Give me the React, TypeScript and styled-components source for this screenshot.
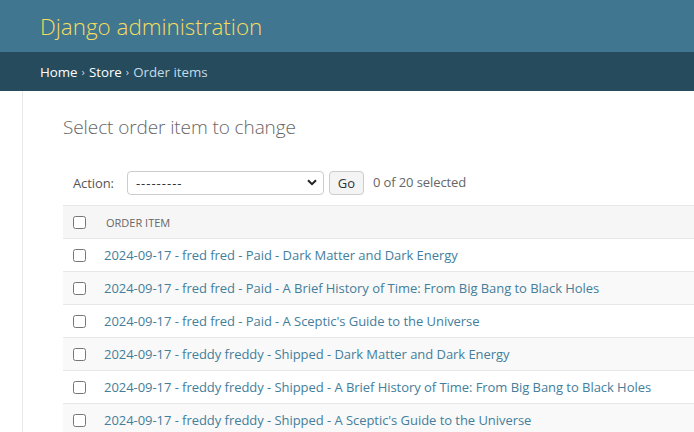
import React from "react";
import styled, { createGlobalStyle } from "styled-components";

const Global = createGlobalStyle`
  html, body { margin: 0; padding: 0; background: #fff; }
  body { font-family: "Open Sans", "Noto Sans", sans-serif; color: #333; font-size: 14px; overflow: hidden; }
  * { box-sizing: border-box; }
`;

const Header = styled.header`
  height: 52px;
  background: #417690;
  padding: 0 40px;
  display: flex;
  align-items: center;
`;

const Brand = styled.h1`
  margin: 0;
  font-size: 22.4px;
  font-weight: 300;
  color: #f5dd5d;
`;

const Breadcrumbs = styled.nav`
  height: 39px;
  background: #264b5d;
  padding: 0 40px;
  display: flex;
  align-items: center;
  font-size: 13.3px;
  color: #c4dce8;
`;

const Crumb = styled.a`
  color: #fff;
  text-decoration: none;
`;

const Sep = styled.span`
  margin: 0 4px;
  font-size: 11px;
  color: #c4dce8;
`;

const Main = styled.div`
  display: flex;
  min-height: 341px;
`;

const SidebarToggle = styled.div`
  width: 23px;
  flex: 0 0 23px;
  border-right: 1px solid #e8e8e8;
`;

const Content = styled.div`
  flex: 1;
  padding: 20px 0 0 40px;
  min-width: 0;
`;

const Title = styled.h1`
  margin: 4px 0 0;
  font-size: 19px;
  font-weight: 300;
  color: #666;
  letter-spacing: -0.1px;
  line-height: 24px;
`;

const Actions = styled.div`
  margin-top: 22px;
  display: flex;
  align-items: center;
  padding: 0 10px;
  height: 44px;
  font-size: 13px;
  color: #666;
  letter-spacing: -0.1px;
`;

const Label = styled.span`
  margin-right: 13px;
  color: #555;
`;

const SelectWrap = styled.div`
  position: relative;
  width: 197px;
  height: 24px;
`;

const Select = styled.select`
  appearance: none;
  width: 100%;
  height: 24px;
  border: 1px solid #ccc;
  border-radius: 4px;
  background: #fff;
  padding: 0 8px;
  font-family: inherit;
  font-size: 13px;
  letter-spacing: 1px;
  color: #333;
`;

const Chevron = styled.svg`
  position: absolute;
  right: 7px;
  top: 8px;
  pointer-events: none;
`;

const GoButton = styled.button`
  margin-left: 5px;
  width: 35px;
  height: 24px;
  border: 1px solid #ccc;
  border-radius: 4px;
  background: #f4f4f4;
  font-family: inherit;
  font-size: 13px;
  color: #333;
  padding: 0;
`;

const Counter = styled.span`
  margin-left: 9px;
  color: #666;
  margin-top: -2px;
`;

const Table = styled.div`
  width: 100%;
  border-top: 1px solid #e8e8e8;
`;

const Row = styled.div<{ $head?: boolean; $alt?: boolean }>`
  height: 33px;
  display: flex;
  align-items: center;
  padding-left: 10px;
  border-bottom: 1px solid #e8e8e8;
  background: ${(p) => (p.$head ? "#f6f6f6" : p.$alt ? "#f9f9f9" : "#fff")};
`;

const Check = styled.input`
  margin: 0;
  width: 13px;
  height: 13px;
  flex: 0 0 13px;
`;

const HeadLabel = styled.span`
  margin-left: 20px;
  font-size: 11px;
  color: #666;
  text-transform: uppercase;
  padding-top: 1px;
`;

const ItemLink = styled.a`
  margin-left: 18px;
  font-size: 13px;
  color: #447e9b;
  text-decoration: none;
  white-space: nowrap;
  letter-spacing: -0.05px;
`;

const items = [
  "2024-09-17 - fred fred - Paid - Dark Matter and Dark Energy",
  "2024-09-17 - fred fred - Paid - A Brief History of Time: From Big Bang to Black Holes",
  "2024-09-17 - fred fred - Paid - A Sceptic's Guide to the Universe",
  "2024-09-17 - freddy freddy - Shipped - Dark Matter and Dark Energy",
  "2024-09-17 - freddy freddy - Shipped - A Brief History of Time: From Big Bang to Black Holes",
  "2024-09-17 - freddy freddy - Shipped - A Sceptic's Guide to the Universe",
];

export default function App() {
  return (
    <>
      <Global />
      <Header>
        <Brand>Django administration</Brand>
      </Header>
      <Breadcrumbs>
        <Crumb href="#">Home</Crumb>
        <Sep>›</Sep>
        <Crumb href="#">Store</Crumb>
        <Sep>›</Sep>
        <span>Order items</span>
      </Breadcrumbs>
      <Main>
        <SidebarToggle />
        <Content>
          <Title>Select order item to change</Title>
          <Actions>
            <Label>Action:</Label>
            <SelectWrap>
              <Select defaultValue="">
                <option value="">---------</option>
              </Select>
              <Chevron width="10" height="7" viewBox="0 0 10 7">
                <path d="M1 1.2 L5 5.2 L9 1.2" fill="none" stroke="#222" strokeWidth="2" />
              </Chevron>
            </SelectWrap>
            <GoButton>Go</GoButton>
            <Counter>0 of 20 selected</Counter>
          </Actions>
          <Table>
            <Row $head>
              <Check type="checkbox" />
              <HeadLabel>Order item</HeadLabel>
            </Row>
            {items.map((t, i) => (
              <Row key={i} $alt={i % 2 === 1}>
                <Check type="checkbox" />
                <ItemLink href="#">{t}</ItemLink>
              </Row>
            ))}
          </Table>
        </Content>
      </Main>
    </>
  );
}
